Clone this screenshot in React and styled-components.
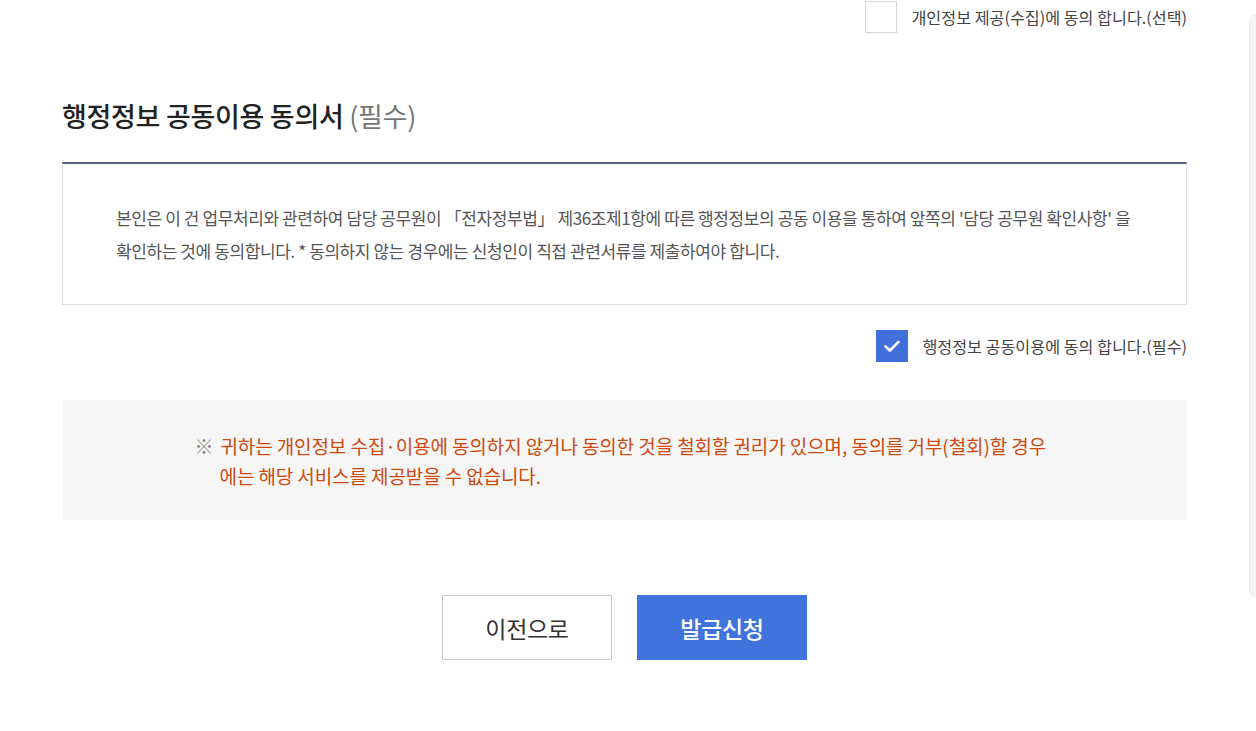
import React from "react"
import styled, { createGlobalStyle } from "styled-components"

const GlobalStyle = createGlobalStyle`
  html, body {
    margin: 0;
    padding: 0;
    background: #fff;
  }
  body {
    font-family: "Noto Sans CJK KR", "Noto Sans", sans-serif;
    color: #444;
    overflow: hidden;
  }
`

const Page = styled.div`
  width: 1125px;
  margin-left: 62px;
  padding-top: 1px;
`

const AgreeRow = styled.label`
  display: flex;
  justify-content: flex-end;
  align-items: center;
  gap: 14px;
  margin-top: ${p => p.$top || 0}px;
`

const Box = styled.span`
  width: 32px;
  height: 32px;
  box-sizing: border-box;
  display: flex;
  align-items: center;
  justify-content: center;
  background: ${p => (p.$checked ? "#4170dc" : "#fff")};
  border: 1px solid ${p => (p.$checked ? "#4170dc" : "#d6d6d6")};
`

const AgreeText = styled.span`
  font-size: 16.2px;
  line-height: 24px;
  color: #444;
`

const Title = styled.h2`
  margin: 66px 0 29px;
  font-size: 27px;
  line-height: 34px;
  font-weight: 500;
  color: #222;
  letter-spacing: -0.3px;

  span {
    color: #777;
    font-weight: 400;
  }
`

const TermsBox = styled.div`
  border: 1px solid #dddddd;
  border-top: 2px solid #5b6386;
  padding: 37px 40px 37px 53px;
  font-size: 17px;
  line-height: 33px;
  color: #555;
  letter-spacing: -0.4px;
`

const Notice = styled.div`
  margin-top: 38px;
  height: 120px;
  box-sizing: border-box;
  background: #f6f6f6;
  padding-top: 31px;
`

const NoticeText = styled.p`
  width: 860px;
  box-sizing: border-box;
  margin: 0 auto;
  padding-left: 25px;
  text-indent: -25px;
  font-size: 19px;
  line-height: 30px;
  color: #cc4a10;
  letter-spacing: -0.1px;

  em {
    font-style: normal;
    color: #888;
    margin-right: 7px;
  }
`

const Buttons = styled.div`
  display: flex;
  justify-content: center;
  gap: 25px;
  margin-top: 75px;
`

const Button = styled.button`
  width: 170px;
  height: 65px;
  box-sizing: border-box;
  font-family: inherit;
  font-size: 23px;
  letter-spacing: -0.3px;
  cursor: pointer;
  border: 1px solid ${p => (p.$primary ? "#4173dd" : "#cccccc")};
  background: ${p => (p.$primary ? "#4173dd" : "#fff")};
  color: ${p => (p.$primary ? "#fff" : "#333")};
  font-weight: ${p => (p.$primary ? 500 : 400)};
`

const ScrollThumb = styled.div`
  position: fixed;
  top: 15px;
  right: 0;
  width: 6px;
  height: 580px;
  background: #f5f5f5;
  border: 1px solid #ececec;
  border-right: none;
  border-radius: 7px 0 0 7px;
`

const Check = () => (
  <svg width="18" height="14" viewBox="0 0 18 14" fill="none">
    <path d="M2.5 7.5l4.3 4L15.5 2.8" stroke="#fff" strokeWidth="2.6" strokeLinecap="round" strokeLinejoin="round" />
  </svg>
)

const App = () => {
  return (
    <>
      <GlobalStyle />
      <Page>
        <AgreeRow>
          <Box />
          <AgreeText>개인정보 제공(수집)에 동의 합니다.(선택)</AgreeText>
        </AgreeRow>

        <Title>
          행정정보 공동이용 동의서 <span>(필수)</span>
        </Title>
        <TermsBox>
          본인은 이 건 업무처리와 관련하여 담당 공무원이 「전자정부법」 제36조제1항에 따른 행정정보의 공동 이용을 통하여 앞쪽의 '담당 공무원 확인사항' 을
          확인하는 것에 동의합니다. * 동의하지 않는 경우에는 신청인이 직접 관련서류를 제출하여야 합니다.
        </TermsBox>

        <AgreeRow $top={25}>
          <Box $checked>
            <Check />
          </Box>
          <AgreeText>행정정보 공동이용에 동의 합니다.(필수)</AgreeText>
        </AgreeRow>

        <Notice>
          <NoticeText>
            <em>※</em>귀하는 개인정보 수집·이용에 동의하지 않거나 동의한 것을 철회할 권리가 있으며, 동의를 거부(철회)할 경우에는 해당 서비스를 제공받을 수 없습니다.
          </NoticeText>
        </Notice>

        <Buttons>
          <Button>이전으로</Button>
          <Button $primary>발급신청</Button>
        </Buttons>
      </Page>
      <ScrollThumb />
    </>
  )
}

export default App
